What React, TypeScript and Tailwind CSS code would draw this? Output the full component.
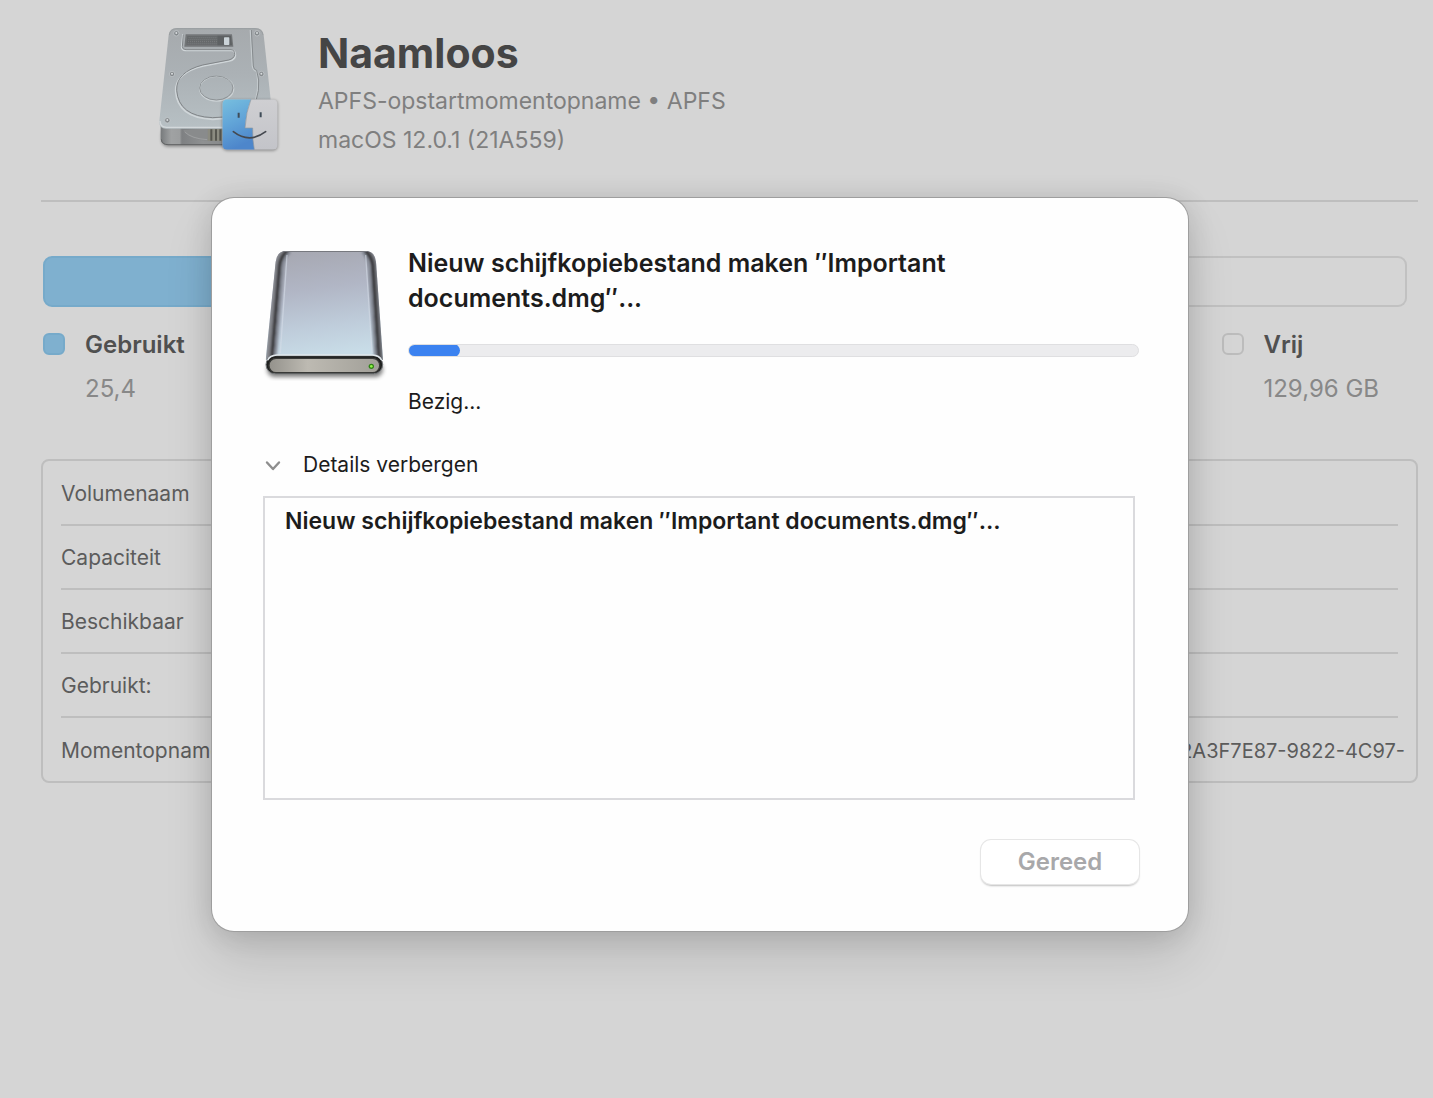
import React from "react";

function StartupDiskIcon() {
  return (
    <svg viewBox="48 42 378 390" className="h-[130px] w-[126px] shrink-0" aria-hidden="true">
      <defs>
        <linearGradient id="hdTop" x1="0" y1="0" x2="0" y2="1">
          <stop offset="0" stopColor="#a6aaad" />
          <stop offset="0.45" stopColor="#abb1b5" />
          <stop offset="1" stopColor="#b7c0c4" />
        </linearGradient>
        <linearGradient id="hdFront" x1="0" y1="0" x2="1" y2="0">
          <stop offset="0" stopColor="#777a7c" />
          <stop offset="0.1" stopColor="#a0a2a3" />
          <stop offset="0.18" stopColor="#9c9e9f" />
          <stop offset="0.2" stopColor="#7e8082" />
          <stop offset="0.4" stopColor="#8f9192" />
          <stop offset="1" stopColor="#77797a" />
        </linearGradient>
        <linearGradient id="finderBlue" x1="0" y1="0" x2="0.3" y2="1">
          <stop offset="0" stopColor="#77bfdf" />
          <stop offset="0.5" stopColor="#62a5d8" />
          <stop offset="1" stopColor="#4d86cb" />
        </linearGradient>
        <linearGradient id="finderWhite" x1="0" y1="0" x2="0" y2="1">
          <stop offset="0" stopColor="#cfcfd2" />
          <stop offset="1" stopColor="#c3c4c9" />
        </linearGradient>
        <clipPath id="finderClip">
          <rect x="247" y="268" width="166" height="151" rx="14" />
        </clipPath>
        <filter id="hdBlur" x="-20%" y="-20%" width="140%" height="140%">
          <feGaussianBlur stdDeviation="5" />
        </filter>
      </defs>
      <rect x="64" y="352" width="330" height="58" rx="20" fill="#000" opacity="0.35" filter="url(#hdBlur)" />
      <path d="M62 335V386Q63 405 84 405H380V335Z" fill="url(#hdFront)" />
      <path d="M130 360Q150 392 205 392V358Z" fill="#898b8c" />
      <path d="M134 366Q155 386 202 389" fill="none" stroke="#a9abac" strokeWidth="2" />
      <rect x="203" y="357" width="46" height="36" fill="#8b8b80" />
      <path d="M214 358V392M228 358V392M241 358V392" stroke="#56564f" strokeWidth="6" />
      <path d="M64 388Q66 404 84 404H250" fill="none" stroke="#606263" strokeWidth="3" />
      <path d="M110 54H346Q368 54 371 75L399 333Q400 356 376 356H78Q56 356 58 333L86 75Q89 54 110 54Z" fill="url(#hdTop)" />
      <path d="M60 333Q60 352 80 352H250" fill="none" stroke="#d3d8db" strokeWidth="4" />
      <path d="M88 75Q91 56 110 56H346Q366 56 369 75" fill="none" stroke="#94989a" strokeWidth="2" />
      <path d="M129 72L125 111Q125 121 137 121H274Q287 122 286 136Q285 149 268 153L190 168Q105 189 107 243Q112 324 218 328L252 325" fill="none" stroke="#d0d6d9" strokeWidth="5" />
      <path d="M130 73L127 110Q127 119 138 119H273Q285 120 284 134Q282 146 266 150L188 165Q108 186 110 241Q116 319 218 323L252 321" fill="none" stroke="#818588" strokeWidth="3" />
      <path d="M331 60L337 168Q339 182 350 184L353 210Q355 245 346 268" fill="none" stroke="#c5cbce" strokeWidth="4" />
      <path d="M334 60L340 168Q341 180 350 181L356 210Q358 245 349 268" fill="none" stroke="#868b8e" strokeWidth="3" />
      <ellipse cx="230" cy="236" rx="51" ry="37" fill="none" stroke="#ccd2d5" strokeWidth="4" />
      <ellipse cx="229" cy="234" rx="50" ry="36" fill="none" stroke="#8d9295" strokeWidth="3" />
      <path d="M137 73H276L280 110H133Z" fill="#737678" />
      <path d="M142 78H232V104H139Z" fill="#66696b" />
      <path d="M146 83H232M145 89H232M144 95H232M143 101H232" stroke="#85888a" strokeWidth="2" strokeDasharray="3 3" />
      <path d="M232 77H273L276 106H232Z" fill="#5e6163" />
      <rect x="252" y="82" width="16" height="23" rx="2" fill="#cbd3d8" />
      {[
        [109, 70],
        [351, 70],
        [96, 192],
        [364, 192],
        [82, 331],
      ].map(([x, y]) => (
        <g key={`${x}-${y}`}>
          <circle cx={x} cy={y} r="8" fill="#858a8d" stroke="#c8cdd0" strokeWidth="2" />
          <circle cx={x} cy={y - 1} r="3" fill="#d8dcde" />
        </g>
      ))}
      <rect x="247" y="270" width="166" height="152" rx="14" fill="#000" opacity="0.35" filter="url(#hdBlur)" />
      <g clipPath="url(#finderClip)">
        <rect x="247" y="268" width="166" height="151" fill="url(#finderWhite)" />
        <path d="M247 268H333Q318 305 315 354H338Q337 390 343 419H247Z" fill="url(#finderBlue)" />
        <path d="M333 268Q318 305 315 354H338Q337 390 343 419" fill="none" stroke="#8f979e" strokeWidth="2" />
      </g>
      <path d="M296 308V323M362 307V322" stroke="#3f4c58" strokeWidth="6" />
      <path d="M280 365Q328 402 377 365" fill="none" stroke="#44484f" strokeWidth="5" strokeLinecap="round" />
    </svg>
  );
}

function ExternalDiskIcon() {
  return (
    <svg viewBox="34 36 378 402" className="h-[134px] w-[126px] shrink-0" aria-hidden="true">
      <defs>
        <linearGradient id="exTop" x1="0" y1="0" x2="0.15" y2="1">
          <stop offset="0" stopColor="#a5a6af" />
          <stop offset="0.4" stopColor="#b1b6c5" />
          <stop offset="0.75" stopColor="#bfcddb" />
          <stop offset="1" stopColor="#c8dce7" />
        </linearGradient>
        <linearGradient id="exFront" x1="0" y1="0" x2="1" y2="0">
          <stop offset="0" stopColor="#94928c" />
          <stop offset="0.35" stopColor="#bdbab2" />
          <stop offset="1" stopColor="#a19f98" />
        </linearGradient>
        <filter id="exBlur" x="-20%" y="-50%" width="140%" height="200%">
          <feGaussianBlur stdDeviation="6" />
        </filter>
        <filter id="exSoft">
          <feGaussianBlur stdDeviation="1" />
        </filter>
        <filter id="exSide" x="-30%" width="160%">
          <feGaussianBlur stdDeviation="3" />
        </filter>
        <clipPath id="exBody">
          <path d="M106 48H350Q376 50 379 80L400 375H48L78 80Q82 50 106 48Z" />
        </clipPath>
      </defs>
      <rect x="52" y="380" width="348" height="46" rx="23" fill="#000" opacity="0.5" filter="url(#exBlur)" />
      <g clipPath="url(#exBody)">
        <rect x="46" y="46" width="356" height="332" fill="url(#exTop)" />
        <g fill="none" filter="url(#exSide)">
          <path d="M106 44Q84 60 80 90L54 378" stroke="#85878d" strokeWidth="14" />
          <path d="M116 46Q95 60 90 90L66 378" stroke="#3c3c41" strokeWidth="12" />
          <path d="M122 50Q104 66 100 96L76 378" stroke="#868b96" strokeWidth="8" />
          <path d="M352 44Q373 60 377 90L398 378" stroke="#77797f" strokeWidth="12" />
          <path d="M344 46Q364 60 369 90L388 378" stroke="#3c3c41" strokeWidth="12" />
          <path d="M338 50Q353 66 358 96L378 378" stroke="#868b96" strokeWidth="8" />
        </g>
        <path d="M112 60L92 354M348 60L367 354" stroke="#d5dde8" strokeWidth="4" opacity="0.6" filter="url(#exSoft)" />
        <path d="M100 49H354" stroke="#77797f" strokeWidth="4" />
      </g>
      <rect x="49" y="362" width="350" height="54" rx="27" fill="#1f201f" stroke="#73777a" strokeWidth="3" />
      <path d="M54 376Q60 361 82 360H368Q390 361 396 376" fill="none" stroke="#e0e7eb" strokeWidth="4" />
      <rect x="58" y="370" width="332" height="43" rx="21" fill="url(#exFront)" stroke="#393a38" strokeWidth="4" />
      <circle cx="365" cy="394" r="8" fill="#2f8414" />
      <circle cx="365" cy="394" r="4" fill="#91f34a" />
    </svg>
  );
}

const rows: { label: string; value?: string }[] = [
  { label: "Volumenaam" },
  { label: "Capaciteit" },
  { label: "Beschikbaar" },
  { label: "Gebruikt:" },
  { label: "Momentopname", value: "2A3F7E87-9822-4C97-" },
];

function VolumeInfo() {
  return (
    <main className="pt-6 pr-[15px] pl-[41px]">
      <header className="flex h-[178px] items-start gap-9 border-b-2 border-[#bebebe] pl-[115px]">
        <StartupDiskIcon />
        <div className="text-[23px] leading-[39px] text-[#7f7f7f]">
          <h1 className="text-[41px] leading-[58px] font-bold text-[#454545]">Naamloos</h1>
          <p>APFS-opstartmomentopname • APFS</p>
          <p>macOS 12.0.1 (21A559)</p>
        </div>
      </header>

      <section aria-label="Gebruik" className="mt-[54px] mr-[11px] ml-0.5">
        <div className="flex h-[51px]">
          <div className="w-1/6 rounded-l-[9px] border-2 border-[#76aaca] bg-[#7fb0cf]" />
          <div className="flex-1 rounded-r-[9px] border-2 border-l-0 border-[#c1c1c1]" />
        </div>
        <div className="mt-[21px] flex justify-between text-2xl text-[#888888]">
          <div className="flex gap-5">
            <span className="mt-[5px] size-[22px] rounded-md border-2 border-[#76aaca] bg-[#7fb0cf]" />
            <div className="leading-[34px]">
              <h2 className="font-semibold text-[#505050]">Gebruikt</h2>
              <p className="mt-2.5">25,4</p>
            </div>
          </div>
          <div className="mr-7 flex gap-[19px]">
            <span className="mt-[5px] size-[22px] rounded-md border-2 border-[#bcbcbc]" />
            <div className="leading-[34px]">
              <h2 className="font-semibold text-[#505050]">Vrij</h2>
              <p className="mt-2.5">129,96 GB</p>
            </div>
          </div>
        </div>
      </section>

      <div className="mt-[53px] rounded-lg border-2 border-[#bebebe] px-[18px]">
        <table className="w-full text-[21px] text-[#5c5c5c]">
          <tbody>
            {rows.map((row) => (
              <tr key={row.label} className="h-16 border-b-2 border-[#bebebe] last:border-b-0">
                <th scope="row" className="pt-0.5 text-left font-normal">
                  {row.label}
                </th>
                <td className="pt-0.5 text-right text-xl">
                  <span className="-mr-[7px]">{row.value}</span>
                </td>
              </tr>
            ))}
          </tbody>
        </table>
      </div>
    </main>
  );
}

function ProgressDialog() {
  return (
    <div
      role="dialog"
      aria-labelledby="dialog-title"
      className="w-full max-w-[976px] rounded-[22px] bg-[#fefefe] px-[49px] pt-12 pb-[47px] text-[#1c1c1c] shadow-[0_0_0_1px_#9e9e9e,0_26px_50px_rgba(0,0,0,0.12),0_2px_28px_rgba(0,0,0,0.14)]"
    >
      <div className="flex gap-[21px]">
        <div className="pt-px">
          <ExternalDiskIcon />
        </div>
        <div className="flex-1">
          <h2 id="dialog-title" className="max-w-[600px] text-[25px] leading-[35px] font-semibold">
            Nieuw schijfkopiebestand maken ″Important documents.dmg″...
          </h2>
          <div
            role="progressbar"
            aria-label="Voortgang"
            aria-valuenow={7}
            aria-valuemin={0}
            aria-valuemax={100}
            className="mt-7 h-[13px] overflow-hidden rounded-full border border-[#dfdfe1] bg-[#ececee]"
          >
            <div className="-m-px h-[13px] w-[52px] rounded-full bg-[#3b82f0]" />
          </div>
          <p className="mt-[29px] text-[21px] leading-8">Bezig...</p>
        </div>
      </div>

      <button type="button" aria-expanded="true" className="mt-[31px] flex items-center gap-5 text-[21px] leading-8">
        <svg viewBox="0 0 20 20" className="ml-0.5 size-5" fill="none" aria-hidden="true">
          <path d="M4 7.5L10 14L16 7.5" stroke="#8e8e8e" strokeWidth="2.4" strokeLinecap="round" strokeLinejoin="round" />
        </svg>
        Details verbergen
      </button>

      <div className="mt-[15px] mr-1 ml-0.5 h-[304px] border-2 border-[#dadadd] px-5 py-[7px] text-[23px] leading-8 font-semibold">
        Nieuw schijfkopiebestand maken ″Important documents.dmg″...
      </div>

      <div className="mt-10 flex justify-end">
        <button
          type="button"
          disabled
          className="h-11 w-[158px] rounded-[10px] bg-white text-2xl font-semibold text-[#a8a8aa] shadow-[0_0_0_1px_#e6e6e6,0_2px_2px_rgba(0,0,0,0.25)]"
        >
          Gereed
        </button>
      </div>
    </div>
  );
}

export default function App() {
  return (
    <div className="relative min-h-screen overflow-hidden bg-[#d5d5d5] font-['Inter',sans-serif]">
      <VolumeInfo />
      <div className="absolute inset-x-0 top-[198px] flex justify-center pr-[33px]">
        <ProgressDialog />
      </div>
    </div>
  );
}
